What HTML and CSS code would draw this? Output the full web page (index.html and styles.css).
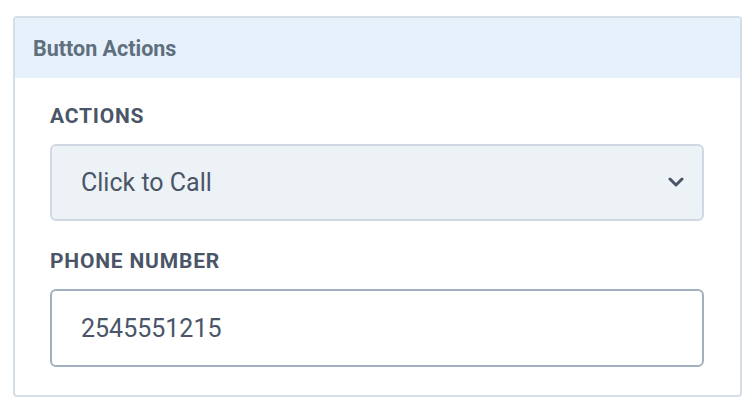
FILE: index.html
```html
<!DOCTYPE html>
<html lang="en">
<head>
    <meta charset="UTF-8">
    <meta name="viewport" content="width=device-width, initial-scale=1.0">
    <title>Button Actions</title>
    <link rel="stylesheet" href="styles.css">
</head>
<body>
    <div class="panel">
        <div class="panel-header">Button Actions</div>
        <div class="panel-body">
            <div class="form-group">
                <label for="action">Actions</label>
                <div class="select-wrap">
                    <select id="action">
                        <option value="call">Click to Call</option>
                        <option value="link">Open Link</option>
                        <option value="email">Send Email</option>
                    </select>
                    <svg class="chevron" width="16" height="10" viewBox="0 0 16 10">
                        <path d="M2 2l6 6 6-6" fill="none" stroke="#4a5568" stroke-width="3" stroke-linecap="round" stroke-linejoin="round"/>
                    </svg>
                </div>
            </div>

            <div class="form-group">
                <label for="phone">Phone Number</label>
                <input type="text" id="phone" value="2545551215">
            </div>
        </div>
    </div>
</body>
</html>
```

FILE: styles.css
```css
* {
    margin: 0;
    padding: 0;
    box-sizing: border-box;
    font-family: 'Roboto', 'Liberation Sans', sans-serif;
}

body {
    background: #fff;
    padding: 16px 12px 0 13px;
}

.panel {
    width: 729px;
    border: 2px solid #d5dde7;
    border-radius: 4px;
    overflow: hidden;
}

.panel-header {
    height: 60px;
    background: #e7f1fb;
    padding-left: 18px;
    display: flex;
    align-items: center;
    font-size: 21.5px;
    font-weight: bold;
    color: #5f6f7e;
}

.panel-body {
    padding: 26px 36px 28px 35px;
}

.form-group + .form-group {
    margin-top: 28px;
}

label {
    display: block;
    font-size: 21px;
    line-height: 24px;
    font-weight: bold;
    letter-spacing: 0.8px;
    text-transform: uppercase;
    color: #4a5568;
    margin-bottom: 16px;
}

.select-wrap {
    position: relative;
}

select, input {
    display: block;
    width: 100%;
    height: 77px;
    padding: 0 29px;
    border-radius: 6px;
    font-size: 25px;
    color: #4a5568;
    outline: none;
}

select {
    appearance: none;
    -webkit-appearance: none;
    background: #edf2f7;
    border: 2px solid #cfd8e3;
}

input {
    height: 78px;
    background: #fff;
    border: 2px solid #a3b0bf;
}

.chevron {
    position: absolute;
    right: 20px;
    top: 33px;
    pointer-events: none;
}
```
